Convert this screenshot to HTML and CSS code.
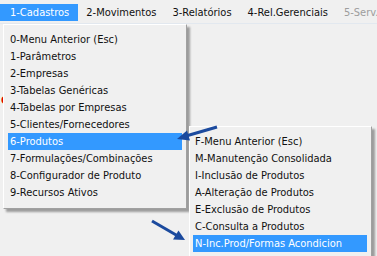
FILE: index.html
```html
<!DOCTYPE html>
<html>

<head>
    <title>Menu Cadastros</title>
    <link rel="stylesheet" href="styles.css">
</head>

<body>
    <div class="menubar">
        <div class="bar-item active">1-Cadastros</div>
        <div class="bar-item">2-Movimentos</div>
        <div class="bar-item">3-Relatórios</div>
        <div class="bar-item">4-Rel.Gerenciais</div>
        <div class="bar-item disabled">5-Serv.I</div>
    </div>

    <div class="workspace">
        <span class="mark">C</span>
    </div>

    <div class="menu main-menu">
        <div class="menu-item">0-Menu Anterior (Esc)</div>
        <div class="menu-item">1-Parâmetros</div>
        <div class="menu-item">2-Empresas</div>
        <div class="menu-item">3-Tabelas Genéricas</div>
        <div class="menu-item">4-Tabelas por Empresas</div>
        <div class="menu-item">5-Clientes/Fornecedores</div>
        <div class="menu-item selected">6-Produtos</div>
        <div class="menu-item">7-Formulações/Combinações</div>
        <div class="menu-item">8-Configurador de Produto</div>
        <div class="menu-item">9-Recursos Ativos</div>
    </div>

    <div class="menu sub-menu">
        <div class="menu-item">F-Menu Anterior (Esc)</div>
        <div class="menu-item">M-Manutenção Consolidada</div>
        <div class="menu-item">I-Inclusão de Produtos</div>
        <div class="menu-item">A-Alteração de Produtos</div>
        <div class="menu-item">E-Exclusão de Produtos</div>
        <div class="menu-item">C-Consulta a Produtos</div>
        <div class="menu-item selected">N-Inc.Prod/Formas Acondicion</div>
    </div>

    <svg class="arrows" width="377" height="256" viewBox="0 0 377 256">
        <line x1="217" y1="127" x2="186" y2="136" />
        <polygon points="177,139 187,130.5 190,140.5" />
        <line x1="152" y1="221" x2="177" y2="235.5" />
        <polygon points="185,240 173,239.5 178.5,230.5" />
    </svg>
</body>

</html>
```

FILE: styles.css
```css
* {
    margin: 0;
    padding: 0;
    box-sizing: border-box;
}

body {
    width: 377px;
    height: 256px;
    overflow: hidden;
    position: relative;
    background-color: #f0f0f0;
    font: 11px "DejaVu Sans Condensed", "DejaVu Sans", sans-serif;
    color: #111;
}

.menubar {
    height: 24px;
    display: flex;
    flex-direction: row;
    padding-top: 4px;
    border-bottom: 1px solid #e2e8ef;
    white-space: nowrap;
}

.bar-item {
    height: 17px;
    line-height: 17px;
    padding: 0 8px 0 8px;
}

.bar-item.active {
    background-color: #3399ff;
    color: white;
    padding: 0 9px 0 10px;
}

.bar-item.disabled {
    color: #9d9d9d;
}

.workspace {
    padding-top: 71px;
}

.mark {
    display: block;
    width: 3px;
    overflow: hidden;
    margin-left: 1px;
    color: #e00000;
    font: bold 10px "DejaVu Sans", sans-serif;
}

.menu {
    position: absolute;
    background-color: #f0f0f0;
    border-top: 1px solid white;
    border-left: 1px solid white;
    border-right: 1px solid #a0a0a0;
    border-bottom: 1px solid #a0a0a0;
    box-shadow: 3px 3px 2px rgba(0, 0, 0, 0.35);
    white-space: nowrap;
}

.main-menu {
    left: 3px;
    top: 24px;
    width: 184px;
    height: 185px;
    padding: 6px 4px 0 4px;
}

.sub-menu {
    left: 189px;
    top: 126px;
    width: 183px;
    height: 150px;
    padding: 6px 4px 0 3px;
}

.menu-item {
    height: 17px;
    line-height: 17px;
    padding-left: 2px;
}

.menu-item.selected {
    background-color: #3399ff;
    color: white;
}

.arrows {
    position: absolute;
    left: 0;
    top: 0;
    pointer-events: none;
}

.arrows line {
    stroke: #1b4a9e;
    stroke-width: 3;
}

.arrows polygon {
    fill: #1b4a9e;
}
```
